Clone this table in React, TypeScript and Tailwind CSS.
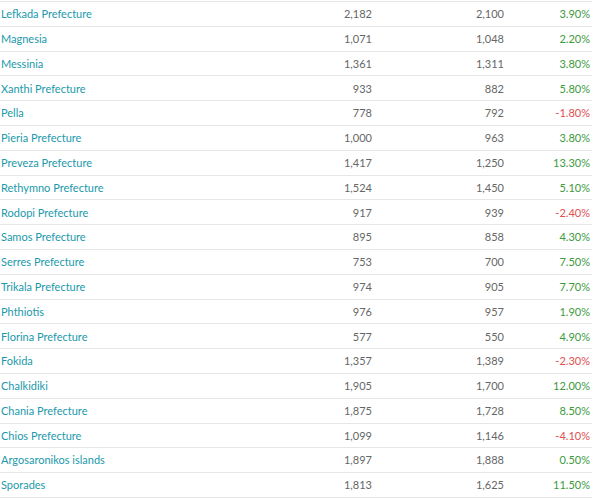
const rows: [string, string, string, string][] = [
  ["Lefkada Prefecture", "2,182", "2,100", "3.90%"],
  ["Magnesia", "1,071", "1,048", "2.20%"],
  ["Messinia", "1,361", "1,311", "3.80%"],
  ["Xanthi Prefecture", "933", "882", "5.80%"],
  ["Pella", "778", "792", "-1.80%"],
  ["Pieria Prefecture", "1,000", "963", "3.80%"],
  ["Preveza Prefecture", "1,417", "1,250", "13.30%"],
  ["Rethymno Prefecture", "1,524", "1,450", "5.10%"],
  ["Rodopi Prefecture", "917", "939", "-2.40%"],
  ["Samos Prefecture", "895", "858", "4.30%"],
  ["Serres Prefecture", "753", "700", "7.50%"],
  ["Trikala Prefecture", "974", "905", "7.70%"],
  ["Phthiotis", "976", "957", "1.90%"],
  ["Florina Prefecture", "577", "550", "4.90%"],
  ["Fokida", "1,357", "1,389", "-2.30%"],
  ["Chalkidiki", "1,905", "1,700", "12.00%"],
  ["Chania Prefecture", "1,875", "1,728", "8.50%"],
  ["Chios Prefecture", "1,099", "1,146", "-4.10%"],
  ["Argosaronikos islands", "1,897", "1,888", "0.50%"],
  ["Sporades", "1,813", "1,625", "11.50%"],
];

export default function App() {
  return (
    <div className="w-[600px] h-[498px] bg-white pt-px font-['Lato',sans-serif] text-[11px]">
      <div className="w-[592px] border-t border-[#e6e6e6]">
        {rows.map(([name, a, b, pct]) => (
          <div key={name} className="flex items-center h-[24.8px] pt-px border-b border-[#e6e6e6]">
            <div className="w-[300px] pl-px text-[#2199ab]">{name}</div>
            <div className="w-[72px] text-right text-[#666]">{a}</div>
            <div className="w-[132px] text-right text-[#666]">{b}</div>
            <div className={`w-[86px] text-right ${pct.startsWith("-") ? "text-[#e0504f]" : "text-[#3d9a3d]"}`}>
              {pct}
            </div>
          </div>
        ))}
      </div>
    </div>
  );
}
